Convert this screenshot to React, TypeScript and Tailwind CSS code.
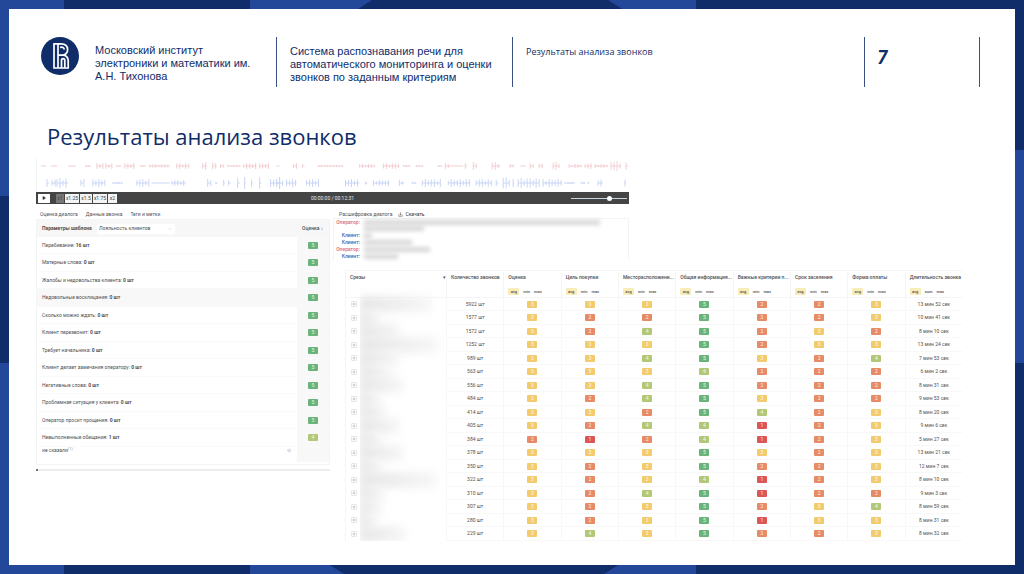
import { ChevronDown, Download, Play, Plus } from "lucide-react";

type Score = 1 | 2 | 3 | 4 | 5;

const scoreColors: Record<Score, string> = {
  5: "bg-[#68b47b]",
  4: "bg-[#b3c877]",
  3: "bg-[#f2cb6e]",
  2: "bg-[#e68b66]",
  1: "bg-[#dc5658]",
};

const criteria: { name: string; count: number; score: Score }[] = [
  { name: "Перебивание", count: 16, score: 5 },
  { name: "Матерные слова", count: 0, score: 5 },
  { name: "Жалобы и недовольства клиента", count: 0, score: 5 },
  { name: "Недовольные восклицания", count: 0, score: 5 },
  { name: "Сколько можно ждать", count: 0, score: 5 },
  { name: "Клиент перезвонит", count: 0, score: 5 },
  { name: "Требует начальника", count: 0, score: 5 },
  { name: "Клиент делает замечания оператору", count: 0, score: 5 },
  { name: "Негативные слова", count: 0, score: 5 },
  { name: "Проблемная ситуация у клиента", count: 0, score: 5 },
  { name: "Оператор просит прощения", count: 0, score: 5 },
  { name: "Невыполненные обещания", count: 1, score: 4 },
];

const columns = [
  "Оценка",
  "Цель покупки",
  "Месторасположени...",
  "Общая информация...",
  "Важные критерии п...",
  "Срок заселения",
  "Форма оплаты",
];

const calls: { count: number; scores: Score[]; time: string; hidden: number }[] = [
  { count: 5922, scores: [3, 3, 3, 5, 2, 2, 3], time: "13 мин 52 сек", hidden: 72 },
  { count: 1577, scores: [3, 2, 2, 5, 2, 2, 3], time: "10 мин 41 сек", hidden: 20 },
  { count: 1572, scores: [3, 2, 4, 5, 2, 3, 2], time: "8 мин 10 сек", hidden: 40 },
  { count: 1252, scores: [3, 3, 3, 5, 2, 3, 3], time: "13 мин 24 сек", hidden: 78 },
  { count: 989, scores: [3, 3, 4, 5, 3, 2, 4], time: "7 мин 53 сек", hidden: 40 },
  { count: 563, scores: [3, 3, 3, 4, 2, 2, 2], time: "6 мин 2 сек", hidden: 32 },
  { count: 556, scores: [3, 3, 4, 5, 2, 2, 2], time: "8 мин 31 сек", hidden: 44 },
  { count: 484, scores: [3, 2, 4, 5, 3, 2, 2], time: "9 мин 53 сек", hidden: 20 },
  { count: 414, scores: [3, 3, 2, 5, 4, 2, 3], time: "8 мин 20 сек", hidden: 26 },
  { count: 405, scores: [3, 2, 4, 4, 1, 2, 3], time: "9 мин 6 сек", hidden: 40 },
  { count: 384, scores: [2, 1, 2, 4, 1, 2, 3], time: "5 мин 27 сек", hidden: 22 },
  { count: 378, scores: [3, 3, 3, 5, 3, 2, 3], time: "13 мин 21 сек", hidden: 44 },
  { count: 350, scores: [3, 2, 3, 5, 2, 2, 3], time: "12 мин 7 сек", hidden: 22 },
  { count: 322, scores: [3, 2, 3, 4, 1, 2, 3], time: "8 мин 10 сек", hidden: 76 },
  { count: 310, scores: [3, 2, 4, 5, 1, 2, 2], time: "9 мин 3 сек", hidden: 24 },
  { count: 307, scores: [3, 2, 3, 5, 2, 3, 4], time: "8 мин 59 сек", hidden: 22 },
  { count: 280, scores: [3, 2, 3, 5, 1, 3, 3], time: "8 мин 31 сек", hidden: 16 },
  { count: 229, scores: [3, 4, 3, 5, 2, 2, 3], time: "8 мин 32 сек", hidden: 46 },
];

// Each burst is [start, end, amplitude] along the 593-unit timeline.
const operatorBursts = [
  [4, 9, 0], [14, 20, 0], [31, 39, 0], [49, 54, 1], [60, 66, 3], [69, 75, 3], [80, 84, 1],
  [88, 98, 3], [104, 109, 1], [113, 133, 2], [140, 152, 3], [166, 170, 4], [176, 180, 4],
  [184, 187, 2], [191, 204, 1], [207, 220, 3], [223, 232, 3], [240, 243, 0], [257, 260, 3],
  [266, 268, 3], [282, 306, 1], [323, 338, 2], [347, 363, 3], [367, 374, 1], [380, 387, 1],
  [402, 406, 1], [409, 414, 3], [414, 427, 0], [429, 431, 4], [437, 440, 4], [456, 464, 4],
  [474, 478, 2], [484, 490, 0], [494, 497, 3], [503, 507, 3], [517, 523, 4], [533, 546, 2],
  [549, 556, 3], [559, 572, 2], [575, 585, 5], [590, 592, 4],
];
const clientBursts = [
  [10, 12, 4], [15, 19, 4], [20, 31, 5], [44, 47, 4], [56, 68, 4], [76, 86, 1], [100, 112, 4],
  [115, 133, 0], [135, 149, 3], [171, 174, 4], [179, 181, 1], [187, 188, 4], [192, 194, 4],
  [201, 203, 6], [208, 209, 6], [215, 216, 4], [223, 225, 6], [234, 246, 4], [240, 243, 6],
  [250, 260, 4], [270, 282, 4], [309, 323, 4], [329, 331, 3], [337, 353, 3], [363, 368, 3],
  [376, 380, 1], [386, 404, 4], [412, 434, 4], [440, 456, 4], [460, 462, 5], [467, 473, 6],
  [477, 478, 6], [482, 503, 5], [507, 526, 4], [529, 538, 1], [545, 549, 1], [552, 553, 1],
  [562, 567, 4], [589, 590, 4],
];

function wavePath(bursts: number[][], mid: number) {
  return bursts
    .map(([from, to, amp]) => {
      let d = `M${from} ${mid}H${to}`;
      for (let x = from; x <= to && amp > 0; x += 3) {
        const h = amp * (0.5 + 0.5 * Math.abs(Math.sin(x * 1.7)));
        d += `M${x} ${(mid - h).toFixed(1)}V${(mid + h).toFixed(1)}`;
      }
      return d;
    })
    .join("");
}

function Badge({ score }: { score: Score }) {
  return (
    <span
      className={`flex h-[7px] w-[10px] items-center justify-center rounded-[1px] text-[5px] leading-none text-white/85 ${scoreColors[score]}`}
    >
      {score}
    </span>
  );
}

function Backdrop() {
  return (
    <svg
      className="absolute inset-0 h-full w-full"
      viewBox="0 0 1024 574"
      preserveAspectRatio="none"
      aria-hidden="true"
    >
      <rect width="1024" height="574" fill="#102d69" />
      <rect width="64" height="574" fill="#234799" />
      <rect y="196" width="64" height="167" fill="#102d69" />
      <rect x="250" width="446" height="574" fill="#234799" />
      <rect x="960" y="150" width="64" height="213" fill="#234799" />
      <path d="M372 0L358 9V565L330 565L344 574H604L618 565L622 9L608 0Z" fill="#102d69" />
    </svg>
  );
}

function Logo() {
  return (
    <svg className="h-[38px] w-[38px] shrink-0" viewBox="0 0 38 38" role="img" aria-label="НИУ ВШЭ">
      <circle cx="19" cy="19" r="19" fill="#102d69" />
      <g fill="none" stroke="#fff" strokeWidth="1.7">
        <path d="M13 6.8V31H27.2V24C27.2 20.5 25.5 18.8 22.5 18.2C25.5 17.2 26.6 15.2 26.6 12.6C26.6 8.8 24 6.8 20 6.8H12.2" />
        <path d="M17 7V31M17 18.2H23M19 10.5C21.5 9.5 23.2 10.6 23.2 12.6M20.5 31V23.5C20.5 21 23.8 21 23.8 23.5V31" />
      </g>
    </svg>
  );
}

function Header() {
  return (
    <header className="flex h-[50px] items-stretch text-[11px] leading-[13px]">
      <div className="flex w-[235px] gap-4">
        <Logo />
        <p className="w-[160px] pt-[7px]">Московский институт электроники и математики им. А.Н. Тихонова</p>
      </div>
      <p className="w-[236px] border-l border-[#3a5080] pt-2 pl-[13px]">
        Система распознавания речи для автоматического мониторинга и оценки звонков по заданным критериям
      </p>
      <p className="flex-1 border-l border-[#3a5080] pt-2 pl-[13px] font-['Open_Sans','Noto_Sans',sans-serif] text-[9px]">
        Результаты анализа звонков
      </p>
      <p className="w-[116px] border-x border-[#3a5080] pt-[13px] pl-3 font-[Lato,sans-serif] text-[19px] leading-[13px] font-black italic">
        7
      </p>
    </header>
  );
}

function Player() {
  return (
    <section aria-label="Запись звонка">
      <svg className="h-[34px] w-full border-l border-gray-100" viewBox="0 0 593 34" preserveAspectRatio="none" aria-hidden="true">
        <path d={wavePath(operatorBursts, 8)} stroke="#f3ced2" strokeWidth="1" fill="none" />
        <path d={wavePath(clientBursts, 25)} stroke="#c9d6f4" strokeWidth="1" fill="none" />
      </svg>
      <div className="flex h-3 items-center justify-between bg-[#444444] px-[2px] text-[5px] leading-none">
        <div className="flex flex-1 items-center gap-[6px]">
          <button aria-label="Воспроизвести" className="flex h-[9px] w-3 items-center justify-center bg-white text-[#333]">
            <Play className="h-1 w-1 fill-current" />
          </button>
          <div className="flex gap-px">
            <button className="h-[9px] w-2 bg-[#777] text-[#444]">x1</button>
            <button className="h-[9px] w-[14px] bg-gray-100 text-[#444]">x1.25</button>
            <button className="h-[9px] w-3 bg-gray-100 text-[#444]">x1.5</button>
            <button className="h-[9px] w-[14px] bg-gray-100 text-[#444]">x1.75</button>
            <button className="h-[9px] w-[9px] bg-gray-100 text-[#444]">x2</button>
          </div>
        </div>
        <span className="text-gray-200">00:00:00 / 00:12:31</span>
        <div className="flex flex-1 justify-end">
          <input
            type="range"
            aria-label="Громкость"
            defaultValue={70}
            className="h-1 w-[56px] appearance-none bg-transparent [&::-webkit-slider-runnable-track]:h-px [&::-webkit-slider-runnable-track]:bg-[#c3d6e6] [&::-webkit-slider-thumb]:-mt-[2px] [&::-webkit-slider-thumb]:h-[5px] [&::-webkit-slider-thumb]:w-[5px] [&::-webkit-slider-thumb]:appearance-none [&::-webkit-slider-thumb]:rounded-full [&::-webkit-slider-thumb]:bg-white"
          />
        </div>
      </div>
    </section>
  );
}

function CriteriaPanel() {
  return (
    <section className="pt-[6px]">
      <nav className="flex h-[9px] items-center gap-2 pl-1 text-[#555]">
        <button>Оценка диалога</button>
        <button>Данные звонка</button>
        <button>Теги и метки</button>
      </nav>
      <div className="border border-gray-100 pb-[2px]">
        <div className="flex h-[17px] items-center bg-[#f7f7f7] text-[#505050]">
          <label htmlFor="template" className="w-[60px] pl-[5px] font-bold">
            Параметры шаблона
          </label>
          <div className="grid w-[78px] items-center bg-white">
            <select
              id="template"
              className="col-start-1 row-start-1 h-[10px] appearance-none rounded-[1px] bg-transparent px-[2px]"
            >
              <option>Лояльность клиентов</option>
            </select>
            <ChevronDown className="pointer-events-none col-start-1 row-start-1 mr-[3px] h-1 w-1 justify-self-end text-gray-400" />
          </div>
          <span className="ml-auto w-8 pl-[5px] font-medium">Оценка ↓</span>
        </div>
        <ul>
          {criteria.map((item) => (
            <li
              key={item.name}
              className="flex items-stretch border-b border-[#fafafa] odd:h-[17px] even:h-[18px] nth-4:bg-[#f8f8f8]"
            >
              <span className="flex flex-1 items-center pl-[5px] whitespace-pre text-[#505050]">
                {item.name}: <b>{item.count} шт</b>
              </span>
              <span className="flex w-8 items-center justify-center bg-[#f8f8f8]">
                <Badge score={item.score} />
              </span>
            </li>
          ))}
        </ul>
        <div className="flex h-[15px]">
          <p className="flex-1 pl-[5px] text-[#505050]">
            не сказали<sup className="text-[4px] text-gray-400">(1)</sup>
          </p>
          <span className="w-[10px] text-gray-400">⊙</span>
          <span className="w-8 bg-[#f8f8f8]" />
        </div>
      </div>
      <div className="mt-[4px] h-[2px] bg-[#eeeeee]">
        <div className="h-[2px] w-[2px] bg-gray-500" />
      </div>
    </section>
  );
}

const phrases = [
  { who: "Оператор", lines: ["w-[236px]", "w-[60px]"] },
  { who: "Клиент", lines: ["w-[8px]"] },
  { who: "Клиент", lines: ["w-[48px]"] },
  { who: "Оператор", lines: ["w-[66px]"] },
  { who: "Клиент", lines: ["w-[34px]"] },
];

function Transcript() {
  return (
    <section className="h-[66px] w-[296px] pt-[6px]">
      <div className="flex h-[8px] items-center gap-[6px] pl-[6px] text-[#555]">
        <span>Расшифровка диалога</span>
        <button className="flex items-center gap-[2px] text-[#333]">
          <Download className="h-[5px] w-[5px]" />
          Скачать
        </button>
      </div>
      <dl className="grid grid-cols-[26px_1fr] gap-x-[4px] border border-b-0 border-gray-100 text-[5px] leading-[7px]">
        {phrases.map((phrase, i) => (
          <div key={i} className="contents">
            <dt className={`text-right font-medium ${phrase.who === "Оператор" ? "text-[#dc6a70]" : "text-[#3b66b5]"}`}>
              {phrase.who}:
            </dt>
            <dd>
              {phrase.lines.map((width) => (
                <div key={width} className={`my-px h-[5px] bg-[#d6d6d6] blur-[2px] ${width}`} />
              ))}
            </dd>
          </div>
        ))}
      </dl>
    </section>
  );
}

function Aggregates({ middle = "min" }: { middle?: string }) {
  return (
    <div className="mt-[7px] flex items-center gap-[4px] text-[4px] leading-[7px] font-medium">
      <button className="w-[11px] rounded-[1px] bg-[#f8edb8]">avg</button>
      <button>{middle}</button>
      <button>max</button>
    </div>
  );
}

function CallsTable() {
  const head = "h-[27px] border border-[#f5f5f5] p-0 pt-[3px] pl-[4px] text-left align-top font-medium";
  const cell = "border border-[#f8f8f8] p-0";
  return (
    <div className="overflow-hidden">
      <table className="w-[618px] table-fixed border-collapse text-[#505050]">
        <thead>
          <tr>
            <th className={`${head} w-[101px]`}>
              <div className="flex justify-between">
                <span>Срезы</span>
                <span>▾</span>
              </div>
            </th>
            <th className={head}>
              <div className="whitespace-nowrap">Количество звонков</div>
            </th>
            {columns.map((name) => (
              <th key={name} className={head}>
                <div className="whitespace-nowrap">{name}</div>
                <Aggregates />
              </th>
            ))}
            <th className={head}>
              <div className="whitespace-nowrap">Длительность звонка</div>
              <Aggregates middle="sum" />
            </th>
          </tr>
        </thead>
        <tbody>
          {calls.map((row) => (
            <tr key={row.count} className="odd:h-[13px] even:h-[14px]">
              <td className="border-l border-[#f5f5f5] p-0">
                <div className="flex items-center gap-[3px] pl-[5px]">
                  <button
                    aria-label="Раскрыть"
                    className="flex h-[6px] w-[6px] items-center justify-center rounded-[1px] border border-gray-200 text-gray-500"
                  >
                    <Plus className="h-1 w-1" />
                  </button>
                  <div className="-my-1 flex-1 overflow-x-clip">
                    <div
                      className="h-4 bg-linear-to-r from-[#e6e6e6] to-[#f7f7f7] blur-[4px]"
                      style={{ width: row.hidden }}
                    />
                  </div>
                </div>
              </td>
              <td className={`${cell} text-center`}>{row.count} шт</td>
              {row.scores.map((score, i) => (
                <td key={i} className={cell}>
                  <div className="flex justify-center">
                    <Badge score={score} />
                  </div>
                </td>
              ))}
              <td className={`${cell} text-center`}>{row.time}</td>
            </tr>
          ))}
        </tbody>
      </table>
    </div>
  );
}

export default function App() {
  return (
    <div className="relative flex min-h-screen p-[9px] font-['Liberation_Sans',Arial,sans-serif] text-[#102d69]">
      <Backdrop />
      <main className="relative min-w-0 flex-1 bg-white pt-7 pr-[35px] pl-8">
        <Header />
        <h1 className="mt-[33px] ml-[6px] font-['Open_Sans','Noto_Sans',sans-serif] text-[22px] leading-[32px]">
          Результаты анализа звонков
        </h1>
        <div className="mt-[6px] -ml-[5px] pr-[18px] font-[Roboto,'Noto_Sans',sans-serif] text-[5px] leading-[7px]">
          <div className="w-[593px]">
            <Player />
          </div>
          <div className="grid grid-cols-[294px_minmax(0,1fr)] gap-x-[3px]">
            <CriteriaPanel />
            <div className="min-w-0">
              <Transcript />
              <div className="pl-3">
                <CallsTable />
              </div>
            </div>
          </div>
        </div>
      </main>
    </div>
  );
}
